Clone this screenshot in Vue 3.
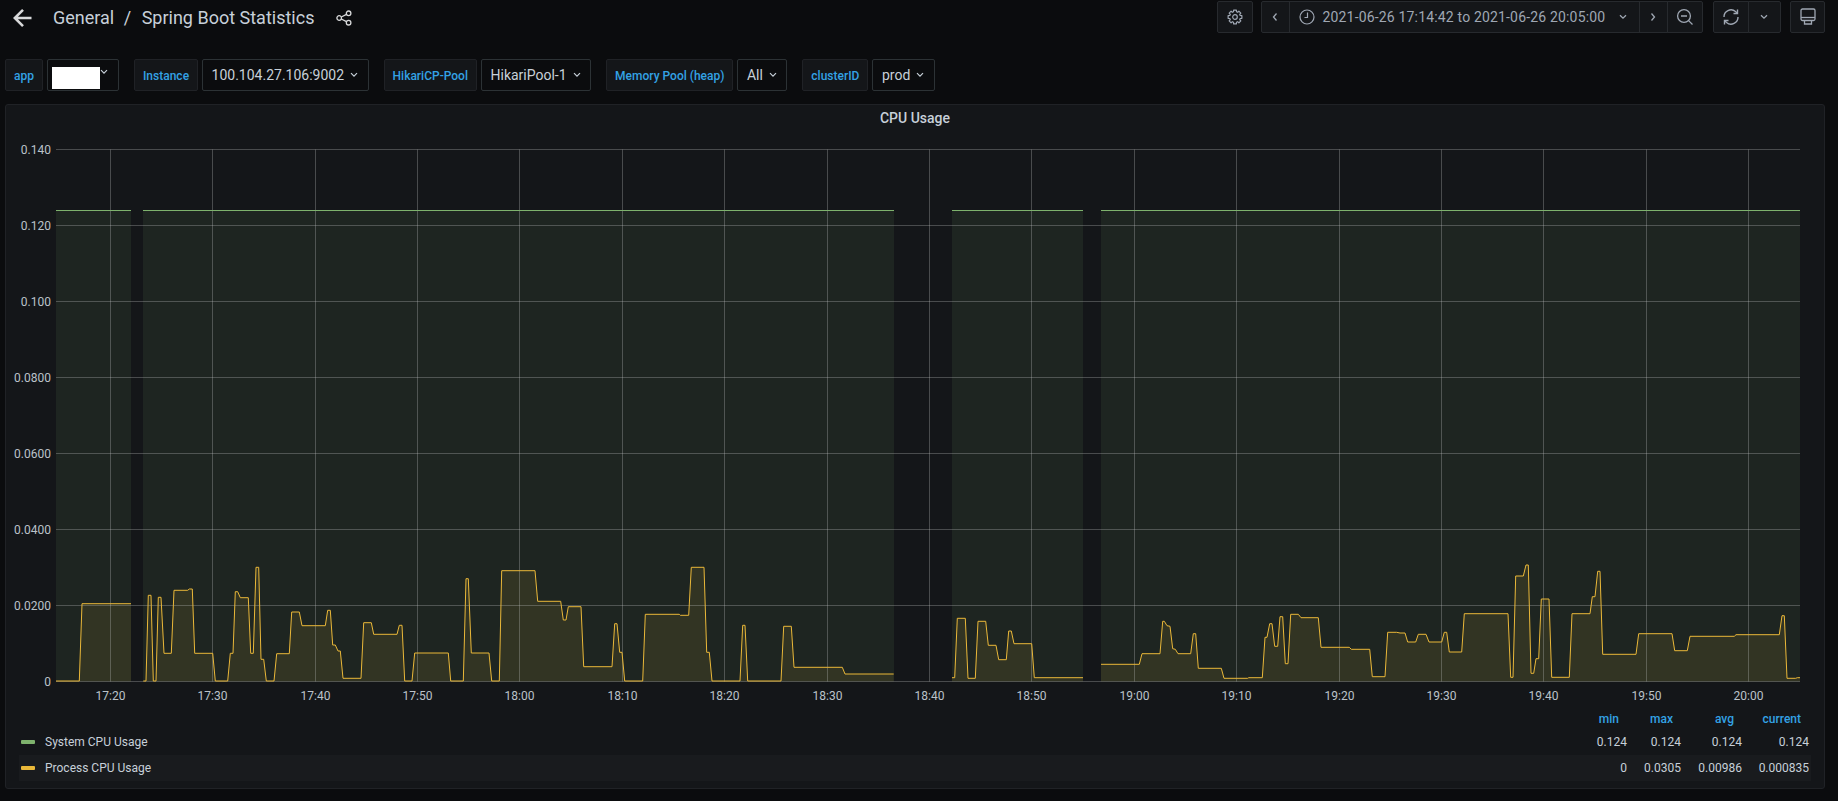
<script setup>
const yBase = 681.5
const conv = (ox, arr) => {
  const out = []
  for (let i = 0; i < arr.length; i += 2) out.push([ox + arr[i] / 3, 555 + arr[i + 1] / 3])
  return out
}
const segA = conv(50, [18,378,88,378,96,146,243,146])
const segB = [
  ...conv(50, [280,378,288,378,295,121,303,121,310,378,318,378,325,127,333,127,342,295,364,295,372,106,413,106,418,102,427,102,434,295,488,295,496,378,533,378,541,295,549,295,556,110,563,110,571,128,595,128,602,295,610,295,618,37,626,37,633,313,641,313,649,378,672,378,680,296,718,296,725,171,748,171,756,212,826,212,833,166,841,166,848,270,856,270,864,288,871,288,879,370,933,370,941,203,964,203,971,238,1041,238,1048,211,1056,211,1064,378,1086,378,1094,294,1195,294,1202,378,1240,378,1248,71,1255,71,1264,294,1317,294,1325,378]),
  ...conv(500, [-2,378,5,47,105,47,113,139,182,139,190,195,198,195,205,155,243,155,251,335,336,335,344,206,351,206,359,292,366,292,374,378,428,378,436,178,538,178,541,181,566,181,574,37,612,37,620,292,628,292,636,378,720,378,728,211,735,211,743,378,843,378,851,214,874,214,882,337,1027,337,1035,357,1181,357])
]
const segC = conv(950, [6,368,14,368,22,190,46,190,54,370,76,370,84,199,107,199,115,271,138,271,146,314,169,314,176,228,184,228,192,266,245,266,253,368,399,368])
const segD = [
  ...conv(950, [453,328,568,328,576,296,630,296,638,199,643,199,651,212,660,214,668,281,676,283,684,296,722,296,730,236,737,236,745,340,814,340,822,370,893,370,896,368,937,368,945,247,951,247,959,206,966,206,974,274,983,274,990,185,998,185,1006,326,1014,326,1022,178,1045,178,1053,188,1105,188,1113,277,1198,277,1204,283,1259,283,1267,365,1305,365,1313,232,1340,232]),
  ...conv(1400, [0,234,15,234,23,261,47,261,55,238,78,238,87,261,125,261,133,232,140,232,148,291,185,291,193,176,324,176,332,367,339,367,347,63,370,63,378,30,385,30,393,355,401,355,408,311,416,311,424,132,447,132,455,367,508,367,516,176,570,176,577,125,585,125,593,49,600,49,608,298,708,298,716,236,816,236,824,287,862,287,870,244,1003,244,1008,239,1138,239,1146,182,1153,182,1161,370,1187,370,1192,368,1200,368])
]
const toLine = pts => 'M' + pts.map(p => p[0].toFixed(1) + ' ' + p[1].toFixed(1)).join('L')
const toArea = pts => toLine(pts) + `L${pts[pts.length - 1][0].toFixed(1)} ${yBase}L${pts[0][0].toFixed(1)} ${yBase}Z`
const procLines = [segA, segB, segC, segD].map(toLine)
const procAreas = [segA, segB, segC, segD].map(toArea)
const sysSegs = [[56, 131], [143, 894], [952, 1083], [1101, 1800]]

const yTicks = [
  ['0.140', 149.5], ['0.120', 225.5], ['0.100', 301.5], ['0.0800', 377.5],
  ['0.0600', 453.5], ['0.0400', 529.5], ['0.0200', 605.5], ['0', 681.5]
]
const xTicks = [
  ['17:20', 110.5], ['17:30', 212.5], ['17:40', 315.5], ['17:50', 417.5], ['18:00', 519.5],
  ['18:10', 622.5], ['18:20', 724.5], ['18:30', 827.5], ['18:40', 929.5], ['18:50', 1031.5],
  ['19:00', 1134.5], ['19:10', 1236.5], ['19:20', 1339.5], ['19:30', 1441.5], ['19:40', 1543.5],
  ['19:50', 1646.5], ['20:00', 1748.5]
]
const vars = [
  { label: 'app', value: '', cls: 'v-app' },
  { label: 'Instance', value: '100.104.27.106:9002' },
  { label: 'HikariCP-Pool', value: 'HikariPool-1' },
  { label: 'Memory Pool (heap)', value: 'All' },
  { label: 'clusterID', value: 'prod' }
]
const legend = [
  { name: 'System CPU Usage', cls: 'green', vals: ['0.124', '0.124', '0.124', '0.124'] },
  { name: 'Process CPU Usage', cls: 'yellow', alt: true, vals: ['0', '0.0305', '0.00986', '0.000835'] }
]
const gear = (() => {
  const cx = 8, cy = 8, teeth = 8
  let d = ''
  for (let i = 0; i < teeth; i++) {
    const a = (i / teeth) * Math.PI * 2
    const st = Math.PI / teeth
    const p = [[a - st * 0.5, 7], [a + st * 0.5, 7], [a + st * 0.72, 5.4], [a + st * 1.28, 5.4]]
    p.forEach((q, j) => {
      d += (i === 0 && j === 0 ? 'M' : 'L') + (cx + q[1] * Math.cos(q[0])).toFixed(2) + ' ' + (cy + q[1] * Math.sin(q[0])).toFixed(2)
    })
  }
  return d + 'Z'
})()
</script>

<template>
  <div class="page">
    <header class="topbar">
      <div class="crumbs">
        <svg class="back" width="20" height="20" viewBox="0 0 20 20">
          <path d="M18.5 10H2M10 1.8L1.8 10l8.2 8.2" fill="none" stroke="#d8d9da" stroke-width="2.6" />
        </svg>
        <span class="crumb-text">General</span>
        <span class="crumb-text slash">/</span>
        <span class="crumb-text">Spring Boot Statistics</span>
        <svg class="share" width="16" height="16" viewBox="0 0 16 16" fill="none" stroke="#d8d9da" stroke-width="1.3">
          <circle cx="3.2" cy="8" r="2.3" />
          <circle cx="12.6" cy="3.3" r="2.3" />
          <circle cx="12.6" cy="12.7" r="2.3" />
          <path d="M5.3 7L10.5 4.3M5.3 9L10.5 11.7" />
        </svg>
      </div>
      <div class="tools">
        <button class="btn b-gear">
          <svg width="16" height="16" viewBox="0 0 16 16" fill="none" stroke="#9fa7b3" stroke-width="1.2">
            <path :d="gear" stroke-linejoin="round" />
            <circle cx="8" cy="8" r="2.3" />
          </svg>
        </button>
        <div class="group g-time">
          <button class="btn b-nav">
            <svg width="8" height="10" viewBox="0 0 8 10" fill="none" stroke="#9fa7b3" stroke-width="1.3"><path d="M5.5 1.5L2.5 5l3 3.5" /></svg>
          </button>
          <button class="btn b-range">
            <svg width="16" height="16" viewBox="0 0 16 16" fill="none" stroke="#9fa7b3" stroke-width="1.2">
              <circle cx="8" cy="8" r="7" />
              <path d="M8.5 3.5V8.5H5.5" />
            </svg>
            <span class="time-text">2021-06-26 17:14:42 to 2021-06-26 20:05:00</span>
            <svg class="chev-r" width="10" height="6" viewBox="0 0 10 6" fill="none" stroke="#9fa7b3" stroke-width="1.3"><path d="M2 1.2L5 4.2 8 1.2" /></svg>
          </button>
          <button class="btn b-nav">
            <svg width="8" height="10" viewBox="0 0 8 10" fill="none" stroke="#9fa7b3" stroke-width="1.3"><path d="M2.5 1.5L5.5 5l-3 3.5" /></svg>
          </button>
          <button class="btn b-zoom">
            <svg width="18" height="18" viewBox="0 0 18 18" fill="none" stroke="#9fa7b3" stroke-width="1.3">
              <circle cx="8" cy="8" r="6.4" />
              <path d="M5 8h6M12.6 12.6L16.5 16.5" />
            </svg>
          </button>
        </div>
        <div class="group g-refresh">
          <button class="btn b-refresh">
            <svg width="18" height="20" viewBox="0 0 18 20" fill="none" stroke="#9fa7b3" stroke-width="1.4">
              <path d="M2 10a7 7 0 0 1 11.5-5.5L15.5 6.5M16 10a7 7 0 0 1-11.5 5.5L2.5 13.5" />
              <path d="M15.5 2.5v4h-4M2.5 17.5v-4h4" />
            </svg>
          </button>
          <button class="btn b-drop">
            <svg width="10" height="6" viewBox="0 0 10 6" fill="none" stroke="#9fa7b3" stroke-width="1.3"><path d="M2 1.2L5 4.2 8 1.2" /></svg>
          </button>
        </div>
        <button class="btn b-tv">
          <svg width="16" height="18" viewBox="0 0 16 18" fill="none" stroke="#9fa7b3" stroke-width="1.3">
            <rect x="1" y="1" width="14" height="11.5" rx="1.5" />
            <path d="M1 9.5h14" />
            <path d="M4.5 12.5v3.5h7v-3.5" />
          </svg>
        </button>
      </div>
    </header>

    <div class="vars">
      <div v-for="v in vars" :key="v.label" class="var" :class="v.cls">
        <label class="var-label">{{ v.label }}</label>
        <div class="var-select">
          <span v-if="v.value">{{ v.value }}</span>
          <i v-else class="mask"></i>
          <svg class="chev" width="10" height="6" viewBox="0 0 10 6" fill="none" stroke="#c7d0d9" stroke-width="1.2"><path d="M2 1.2L5 4.2 8 1.2" /></svg>
        </div>
      </div>
    </div>

    <section class="panel">
      <h2 class="panel-title">CPU Usage</h2>
      <svg class="chart" width="1818" height="579" viewBox="6 130 1818 579">
        <rect v-for="s in sysSegs" :key="s[0]" :x="s[0]" y="210.5" :width="s[1] - s[0]" :height="yBase - 210.5" fill="#7eb26d" fill-opacity="0.1" />
        <path v-for="(d, i) in procAreas" :key="i" :d="d" fill="#eab839" fill-opacity="0.1" />
        <g stroke="#c8c8c8" stroke-opacity="0.3" stroke-width="1">
          <line v-for="t in yTicks" :key="t[0]" x1="56" x2="1800" :y1="t[1]" :y2="t[1]" />
          <line v-for="t in xTicks" :key="t[0]" :x1="t[1]" :x2="t[1]" y1="149.5" y2="681.5" />
        </g>
        <line v-for="s in sysSegs" :key="'l' + s[0]" :x1="s[0]" :x2="s[1]" y1="210.5" y2="210.5" stroke="#7eb26d" stroke-width="1" />
        <path v-for="(d, i) in procLines" :key="'p' + i" :d="d" fill="none" stroke="#eab839" stroke-width="1" />
        <g class="tick">
          <text v-for="t in yTicks" :key="t[0]" x="51" :y="t[1] + 4" text-anchor="end">{{ t[0] }}</text>
          <text v-for="t in xTicks" :key="t[0]" :x="t[1]" y="700" text-anchor="middle">{{ t[0] }}</text>
        </g>
      </svg>
      <div class="legend">
        <div class="lg-row lg-head">
          <span></span>
          <span>min</span><span>max</span><span>avg</span><span>current</span>
        </div>
        <div v-for="l in legend" :key="l.name" class="lg-row lg-item" :class="{ alt: l.alt }">
          <span class="lg-name"><i class="swatch" :class="l.cls"></i>{{ l.name }}</span>
          <span v-for="(x, i) in l.vals" :key="i">{{ x }}</span>
        </div>
      </div>
    </section>
  </div>
</template>

<style>
html, body { background: #0b0c0e; }
</style>

<style scoped>
.page {
  box-sizing: border-box;
  width: 1838px;
  height: 801px;
  overflow: hidden;
  padding: 0 13px 0 5px;
  background: #0b0c0e;
  font-family: Roboto, "Liberation Sans", sans-serif;
  color: #c7d0d9;
}
.topbar {
  display: flex;
  justify-content: space-between;
  align-items: flex-start;
  height: 33px;
  padding-top: 1px;
  box-sizing: border-box;
}
.crumbs {
  display: flex;
  align-items: center;
  height: 34px;
  padding-left: 8px;
}
.back { margin-right: 20px; }
.crumb-text { font-size: 18px; color: #c7d0d9; white-space: nowrap; padding-bottom: 2px; }
.slash { margin: 0 10.5px 0 9.5px; }
.share { margin-left: 22px; }
.tools { display: flex; height: 32px; }
.btn {
  display: flex;
  align-items: center;
  justify-content: center;
  box-sizing: border-box;
  height: 32px;
  padding: 0;
  background: #141619;
  border: 1px solid #272a2e;
  color: #9fa7b3;
  font-family: inherit;
  border-radius: 2px;
}
.group { display: flex; }
.group .btn { border-radius: 0; margin-left: -1px; }
.group .btn:first-child { margin-left: 0; border-radius: 2px 0 0 2px; }
.group .btn:last-child { border-radius: 0 2px 2px 0; }
.b-gear { width: 36px; margin-right: 8px; }
.b-nav { width: 28.5px; }
.b-range { width: 351.5px; justify-content: flex-start; padding-left: 9px; }
.time-text { margin-left: 8px; font-size: 14px; white-space: nowrap; letter-spacing: 0.17px; }
.chev-r { margin-left: 13px; }
.b-zoom { width: 36px; }
.g-time { margin-right: 10px; }
.b-refresh { width: 36px; }
.b-drop { width: 33.5px; }
.g-refresh { margin-right: 9px; }
.b-tv { width: 35px; }

.vars { display: flex; margin-top: 26px; height: 32px; }
.var { display: flex; margin-right: 15px; }
.var-label {
  display: flex;
  align-items: center;
  box-sizing: border-box;
  height: 32px;
  padding: 1px 8px 0;
  margin-right: 4px;
  background: #141619;
  border: 1px solid #202226;
  border-radius: 2px;
  font-size: 12px;
  font-weight: 500;
  color: #33a2e5;
  white-space: nowrap;
}
.var-select {
  position: relative;
  display: flex;
  align-items: center;
  box-sizing: border-box;
  height: 32px;
  padding: 0 8.5px;
  background: #0b0c0e;
  border: 1px solid #2c3235;
  border-radius: 2px;
  font-size: 14px;
  color: #c7d0d9;
  white-space: nowrap;
}
.chev { margin-left: 5px; }
.v-app .var-select { width: 72px; }
.v-app .chev { position: absolute; right: 9px; top: 9px; margin: 0; }
.mask {
  position: absolute;
  left: 4px;
  top: 7px;
  width: 48px;
  height: 22px;
  background: #fff;
}

.panel {
  box-sizing: border-box;
  width: 1820px;
  height: 685px;
  margin-top: 13px;
  background: #141619;
  border: 1px solid #202226;
  border-radius: 3px;
}
.panel-title {
  margin: 0;
  height: 25px;
  line-height: 26px;
  text-align: center;
  font-size: 14px;
  font-weight: 500;
  color: #c7d0d9;
}
.chart { display: block; }
.tick text { font-family: Roboto, "Liberation Sans", sans-serif; font-size: 12px; fill: #bbc2c9; }
.legend { padding: 0 13px; font-size: 12px; }
.lg-row {
  display: grid;
  grid-template-columns: 1fr 54px 54px 61px 67px;
  align-items: center;
  text-align: right;
  padding-right: 2px;
}
.lg-head { height: 20px; font-weight: 500; color: #33a2e5; }
.lg-head span { padding-right: 8px; }
.lg-item { height: 26px; color: #c7d0d9; }
.lg-item.alt { background: #191b1e; }
.lg-name { display: flex; align-items: center; text-align: left; padding-left: 2px; }
.swatch { width: 14px; height: 4px; margin-right: 10px; border-radius: 1px; }
.swatch.green { background: #7eb26d; }
.swatch.yellow { background: #eab839; }
</style>
